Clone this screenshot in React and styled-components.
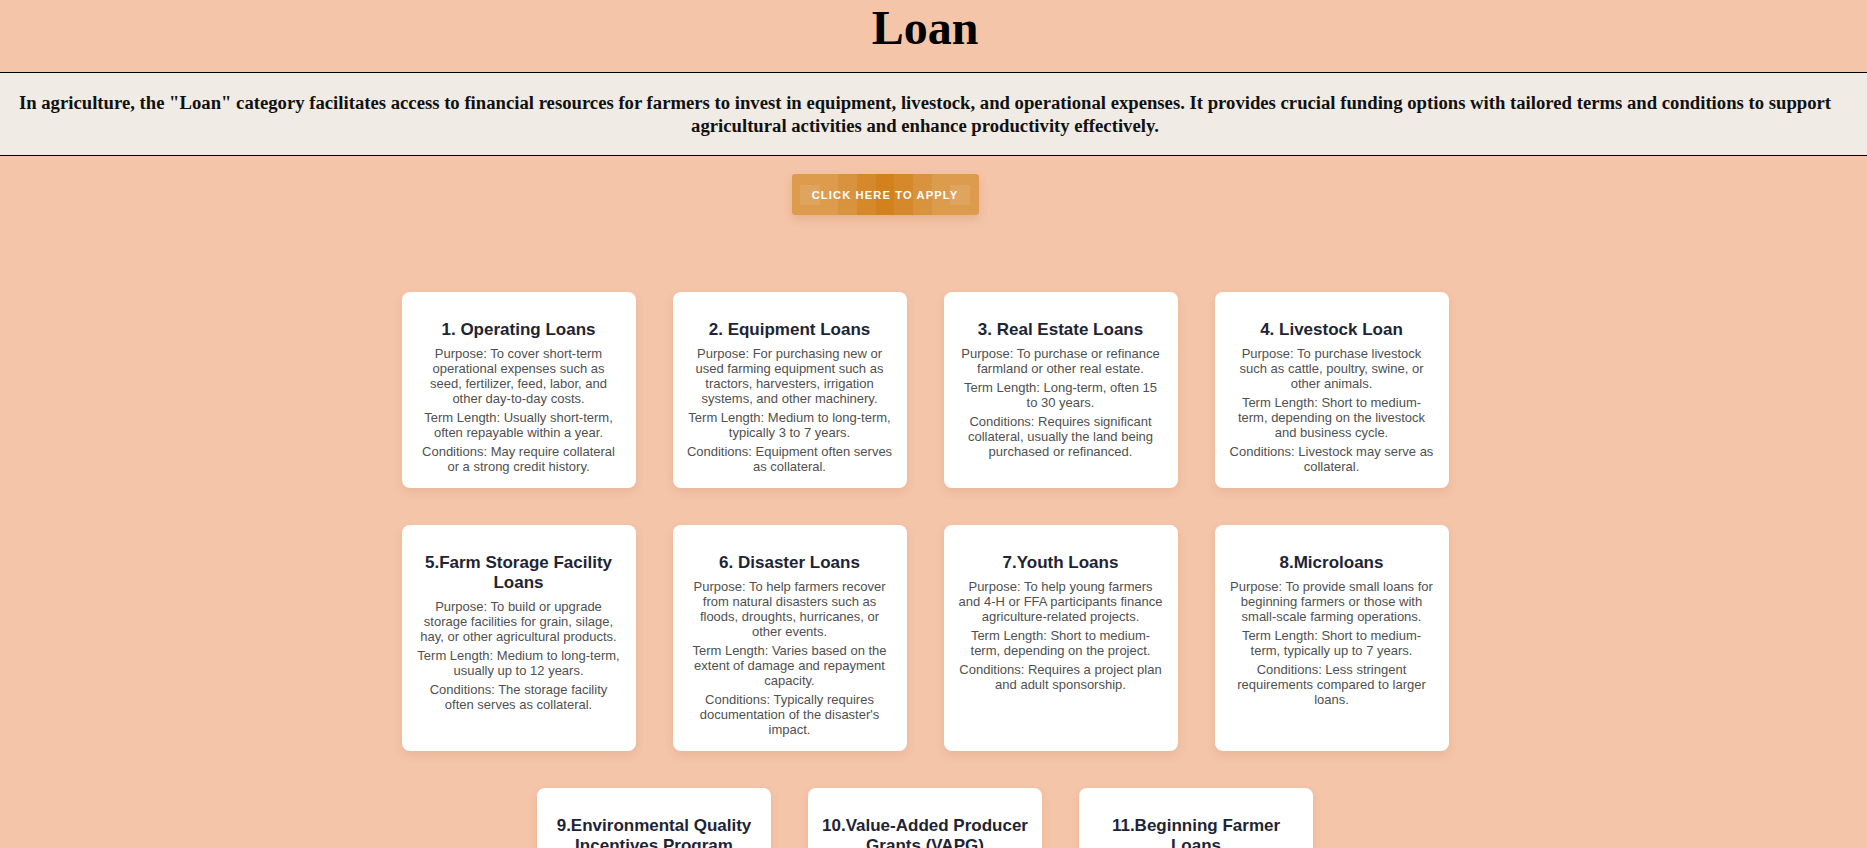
import React from 'react';
import styled, { createGlobalStyle } from 'styled-components';

const loans = [
  {
    title: '1. Operating Loans',
    purpose: 'To cover short-term operational expenses such as seed, fertilizer, feed, labor, and other day-to-day costs.',
    term: 'Usually short-term, often repayable within a year.',
    conditions: 'May require collateral or a strong credit history.',
  },
  {
    title: '2. Equipment Loans',
    purpose: 'For purchasing new or used farming equipment such as tractors, harvesters, irrigation systems, and other machinery.',
    term: 'Medium to long-term, typically 3 to 7 years.',
    conditions: 'Equipment often serves as collateral.',
  },
  {
    title: '3. Real Estate Loans',
    purpose: 'To purchase or refinance farmland or other real estate.',
    term: 'Long-term, often 15 to 30 years.',
    conditions: 'Requires significant collateral, usually the land being purchased or refinanced.',
  },
  {
    title: '4. Livestock Loan',
    purpose: 'To purchase livestock such as cattle, poultry, swine, or other animals.',
    term: 'Short to medium-term, depending on the livestock and business cycle.',
    conditions: 'Livestock may serve as collateral.',
  },
  {
    title: '5.Farm Storage Facility Loans',
    purpose: 'To build or upgrade storage facilities for grain, silage, hay, or other agricultural products.',
    term: 'Medium to long-term, usually up to 12 years.',
    conditions: 'The storage facility often serves as collateral.',
  },
  {
    title: '6. Disaster Loans',
    purpose: 'To help farmers recover from natural disasters such as floods, droughts, hurricanes, or other events.',
    term: 'Varies based on the extent of damage and repayment capacity.',
    conditions: "Typically requires documentation of the disaster's impact.",
  },
  {
    title: '7.Youth Loans',
    purpose: 'To help young farmers and 4-H or FFA participants finance agriculture-related projects.',
    term: 'Short to medium-term, depending on the project.',
    conditions: 'Requires a project plan and adult sponsorship.',
  },
  {
    title: '8.Microloans',
    purpose: 'To provide small loans for beginning farmers or those with small-scale farming operations.',
    term: 'Short to medium-term, typically up to 7 years.',
    conditions: 'Less stringent requirements compared to larger loans.',
  },
  {
    title: '9.Environmental Quality Incentives Program',
    purpose: 'To help farmers adopt conservation practices that improve soil, water, and air quality.',
    term: 'Contracts of up to 10 years.',
    conditions: 'Requires an approved conservation plan.',
  },
  {
    title: '10.Value-Added Producer Grants (VAPG)',
    purpose: 'To help producers enter value-added activities such as processing and marketing.',
    term: 'Grant period of up to 3 years.',
    conditions: 'Requires matching funds from the applicant.',
  },
  {
    title: '11.Beginning Farmer Loans',
    purpose: 'To help new farmers purchase land, equipment, and operating supplies.',
    term: 'Medium to long-term, depending on the purpose.',
    conditions: 'Limited farming experience is required.',
  },
];

const GUTTER = 17;

const GlobalStyle = createGlobalStyle`
  body {
    margin: 0;
    background-color: #f5c5a9;
    font-family: "Liberation Serif", "Times New Roman", serif;
  }
`;

const Page = styled.main`
  padding: 0 ${GUTTER}px 40px 0;
`;

const Title = styled.h1`
  margin: 0 0 17px;
  text-align: center;
  font-size: 48px;
  font-weight: bold;
  color: #000;
`;

const Intro = styled.section`
  margin-right: -${GUTTER}px;
  padding-right: ${GUTTER}px;
  background-color: #f0ebe4;
  border-top: 1px solid #000;
  border-bottom: 1px solid #000;
`;

const IntroText = styled.p`
  margin: 0;
  padding: 19px 6px 18px;
  text-align: center;
  font-size: 18.7px;
  line-height: 22.7px;
  font-weight: bold;
  color: #111;
`;

// the button sits a little left of the page centre
const ApplyRow = styled.div`
  display: flex;
  justify-content: center;
  padding: 18px 80px 77px 0;
`;

const ApplyButton = styled.button`
  position: relative;
  width: 187px;
  height: 41px;
  border: none;
  border-radius: 3px;
  color: white;
  font-family: "Liberation Sans", Arial, sans-serif;
  font-size: 11.2px;
  font-weight: bold;
  letter-spacing: 1.1px;
  text-transform: uppercase;
  cursor: pointer;
  box-shadow: 0 4px 10px rgba(160, 90, 40, 0.2);
  background: linear-gradient(
    90deg,
    #dc9b4d 0 24.6%,
    #d9933f 24.6% 34.8%,
    #d5892b 34.8% 45%,
    #d2811c 45% 54.3%,
    #d5892b 54.3% 64.7%,
    #d9933f 64.7% 74.9%,
    #dc9b4d 74.9% 100%
  );

  &::before,
  &::after {
    content: '';
    position: absolute;
    top: 11px;
    width: 20px;
    height: 20px;
    background-color: rgba(255, 255, 255, 0.1);
  }

  &::before {
    left: 8px;
  }

  &::after {
    right: 9px;
  }
`;

const CardGrid = styled.div`
  max-width: 1050px;
  margin: 0 auto;
  display: flex;
  flex-wrap: wrap;
  justify-content: center;
  gap: 37px;
`;

const Card = styled.article`
  box-sizing: border-box;
  width: 234px;
  padding: 10px 13.9px;
  background-color: #fff;
  border-radius: 8px;
  box-shadow: 0 4px 10px rgba(150, 80, 40, 0.12);
  text-align: center;
  font-family: "Liberation Sans", Arial, sans-serif;
`;

const CardTitle = styled.h3`
  margin: 18px 0 6px;
  font-size: 17px;
  font-weight: bold;
  color: #1e2433;
`;

const CardText = styled.p`
  margin: 4px 0;
  font-size: 13px;
  color: #505050;
`;

const LoanCard = ({ loan }) => (
  <Card>
    <CardTitle>{loan.title}</CardTitle>
    <CardText>Purpose: {loan.purpose}</CardText>
    <CardText>Term Length: {loan.term}</CardText>
    <CardText>Conditions: {loan.conditions}</CardText>
  </Card>
);

const App = () => (
  <>
    <GlobalStyle />
    <Page>
      <Title>Loan</Title>
      <Intro>
        <IntroText>
          In agriculture, the "Loan" category facilitates access to financial resources for farmers to invest in
          equipment, livestock, and operational expenses. It provides crucial funding options with tailored terms and
          conditions to support agricultural activities and enhance productivity effectively.
        </IntroText>
      </Intro>
      <ApplyRow>
        <ApplyButton>Click here to apply</ApplyButton>
      </ApplyRow>
      <CardGrid>
        {loans.map((loan) => (
          <LoanCard key={loan.title} loan={loan} />
        ))}
      </CardGrid>
    </Page>
  </>
);

export default App;
